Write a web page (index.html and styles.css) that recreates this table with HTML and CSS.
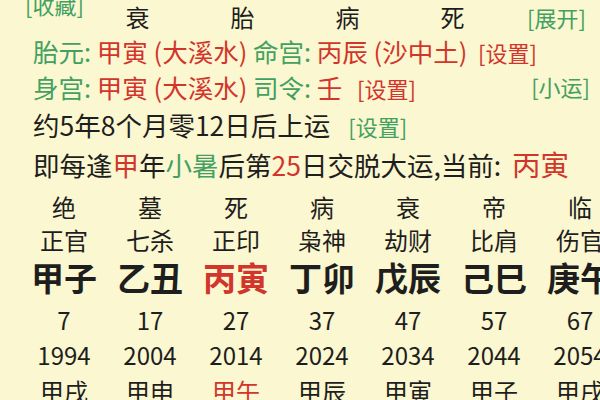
FILE: index.html
```html
<!DOCTYPE html>
<html lang="zh-CN">
<head>
<meta charset="utf-8">
<link rel="stylesheet" href="styles.css">
</head>
<body>
<div class="page">
  <div class="head">
    <span class="tag g fav">[收藏]</span>
    <span class="hc">衰</span>
    <span class="hc">胎</span>
    <span class="hc">病</span>
    <span class="hc">死</span>
    <span class="tag g expand">[展开]</span>
  </div>
  <div class="line l2 sm"><span class="g">胎元:</span> <span class="r">甲寅 (大溪水)</span> <span class="g">命宫:</span> <span class="r">丙辰 (沙中土)</span> <span class="tag r gap1">[设置]</span></div>
  <div class="line l3 sm split">
    <div><span class="g">身宫:</span> <span class="r">甲寅 (大溪水)</span> <span class="g">司令:</span> <span class="r">壬</span> <span class="tag r gap2">[设置]</span></div>
    <span class="tag g">[小运]</span>
  </div>
  <div class="line l4">约5年8个月零12日后上运 <span class="tag g gap">[设置]</span></div>
  <div class="line l5">即每逢<span class="r">甲</span>年<span class="g">小暑</span>后第<span class="r">25</span>日交脱大运,当前: <span class="r big">丙寅</span></div>

  <div class="table">
    <div class="row state"><span>绝</span><span>墓</span><span>死</span><span>病</span><span>衰</span><span>帝</span><span>临</span></div>
    <div class="row god"><span>正官</span><span>七杀</span><span>正印</span><span>枭神</span><span>劫财</span><span>比肩</span><span>伤官</span></div>
    <div class="row pillar"><span>甲子</span><span>乙丑</span><span class="r">丙寅</span><span>丁卯</span><span>戊辰</span><span>己巳</span><span>庚午</span></div>
    <div class="row age"><span>7</span><span>17</span><span>27</span><span>37</span><span>47</span><span>57</span><span>67</span></div>
    <div class="row year"><span>1994</span><span>2004</span><span>2014</span><span>2024</span><span>2034</span><span>2044</span><span>2054</span></div>
    <div class="row dy"><span>甲戌</span><span>甲申</span><span class="r">甲午</span><span>甲辰</span><span>甲寅</span><span>甲子</span><span>甲戌</span></div>
  </div>
</div>
</body>
</html>
```

FILE: styles.css
```css
html, body {
  margin: 0;
  padding: 0;
}
body {
  width: 600px;
  height: 400px;
  overflow: hidden;
  background: #fbf7d0;
  color: #1e1e1e;
  font-family: "Noto Sans CJK SC", "Noto Sans", sans-serif;
  font-size: 24px;
}
.page {
  width: 600px;
  overflow: hidden;
}
.g { color: #42a062; }
.r { color: #d2352c; }
.tag { font-size: 22px; }

.head {
  display: flex;
  align-items: center;
  height: 34px;
  padding-left: 25px;
}
.head .fav {
  width: 60px;
  align-self: flex-start;
  line-height: 20px;
  margin-top: -6px;
}
.head .hc {
  width: 105px;
  text-align: center;
  line-height: 34px;
}
.head .expand {
  margin-left: 22px;
}

.line {
  padding-left: 33px;
  white-space: nowrap;
  font-size: 26.5px;
}
.line.sm { font-size: 25.5px; }
.line .tag { font-size: 22px; }
.line .gap { margin-left: 12px; }
.line .gap1 { margin-left: 5px; }
.line .gap2 { margin-left: 9px; }
.l2 { line-height: 34px; }
.l3 { line-height: 35px; }
.l4 { line-height: 37px; }
.l5 { line-height: 38px; }
.split {
  display: flex;
  justify-content: space-between;
  padding-right: 10px;
}
.line .big { font-size: 28.5px; margin-left: 5px; }

.table {
  padding-left: 21px;
  margin-top: 6px;
}
.row {
  display: grid;
  grid-template-columns: repeat(7, 86px);
  text-align: center;
  white-space: nowrap;
}
.state { line-height: 34px; }
.god { line-height: 32px; }
.pillar { line-height: 40px; font-size: 33px; font-weight: 700; margin-top: 1px; }
.age { line-height: 34px; margin-top: 6px; }
.year { line-height: 34px; margin-top: 1px; }
.dy { line-height: 34px; margin-top: 2px; }
```
